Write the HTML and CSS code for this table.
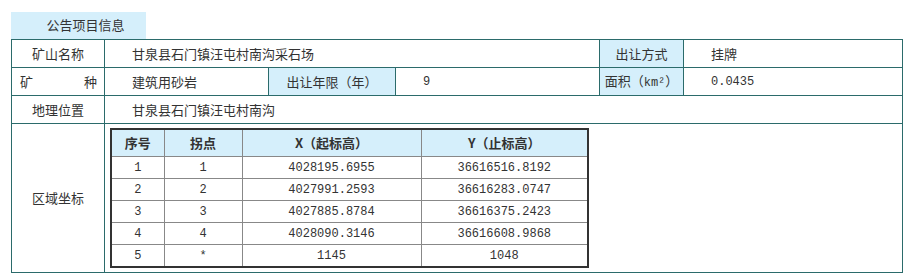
FILE: index.html
```html
<!DOCTYPE html>
<html lang="zh">
<head>
<meta charset="utf-8">
<title>公告项目信息</title>
<link rel="stylesheet" href="styles.css">
</head>
<body>
<div class="page">
  <div class="tab">公告项目信息</div>
  <table class="info">
    <colgroup>
      <col class="c1"><col class="c2"><col class="c3"><col class="c4"><col class="c5"><col class="c6">
    </colgroup>
    <tr>
      <td class="label">矿山名称</td>
      <td class="val" colspan="3">甘泉县石门镇汪屯村南沟采石场</td>
      <td class="label hl">出让方式</td>
      <td class="val">挂牌</td>
    </tr>
    <tr>
      <td class="label"><div class="spread"><span>矿</span><span>种</span></div></td>
      <td class="val">建筑用砂岩</td>
      <td class="label hl">出让年限（年）</td>
      <td class="val num">9</td>
      <td class="label hl">面积（<span class="unit">km²</span>）</td>
      <td class="val num">0.0435</td>
    </tr>
    <tr>
      <td class="label">地理位置</td>
      <td class="val" colspan="5">甘泉县石门镇汪屯村南沟</td>
    </tr>
    <tr class="big">
      <td class="label">区域坐标</td>
      <td class="coords" colspan="5">
        <table class="pts">
          <colgroup>
            <col class="p1"><col class="p2"><col class="p3"><col class="p4">
          </colgroup>
          <thead>
            <tr><th>序号</th><th>拐点</th><th>X（起标高）</th><th>Y（止标高）</th></tr>
          </thead>
          <tbody>
            <tr><td>1</td><td>1</td><td>4028195.6955</td><td>36616516.8192</td></tr>
            <tr><td>2</td><td>2</td><td>4027991.2593</td><td>36616283.0747</td></tr>
            <tr><td>3</td><td>3</td><td>4027885.8784</td><td>36616375.2423</td></tr>
            <tr><td>4</td><td>4</td><td>4028090.3146</td><td>36616608.9868</td></tr>
            <tr><td>5</td><td>*</td><td>1145</td><td>1048</td></tr>
          </tbody>
        </table>
      </td>
    </tr>
  </table>
</div>
</body>
</html>
```
FILE: styles.css
```css
html, body {
  margin: 0;
  padding: 0;
  background: #ffffff;
}
body {
  font-family: "Noto Sans CJK SC", "Liberation Sans", sans-serif;
  font-size: 13px;
  color: #333333;
}
.page {
  padding: 12px 0 0 11px;
}
.tab {
  width: 121px;
  height: 27px;
  line-height: 26px;
  padding-left: 14px;
  background: #d5effb;
  text-align: center;
  font-size: 13px;
  color: #333;
}
table.info {
  border-collapse: collapse;
  table-layout: fixed;
  width: 891px;
}
.info col.c1 { width: 93px; }
.info col.c2 { width: 164px; }
.info col.c3 { width: 127px; }
.info col.c4 { width: 204px; }
.info col.c5 { width: 84px; }
.info col.c6 { width: 219px; }
.info > tbody > tr > td {
  border: 1px solid #2b6b6b;
  height: 27px;
  padding: 0;
  line-height: 16px;
  vertical-align: middle;
}
.info td.label {
  text-align: center;
}
.info td.hl {
  background: #d5effb;
}
.info td.val {
  padding-left: 27px;
}
.num {
  font-family: "Liberation Mono", "DejaVu Sans Mono", monospace;
  font-size: 12px;
}
.unit {
  font-family: "Liberation Mono", monospace;
  font-size: 12px;
}
.spread {
  display: flex;
  justify-content: space-between;
  padding: 0 7px 0 8px;
}
.info tr.big > td {
  height: 148px;
}
.info td.coords {
  padding: 0 0 0 5px;
  vertical-align: middle;
}
table.pts {
  border-collapse: collapse;
  table-layout: fixed;
  width: 477px;
  border: 2px solid #333333;
}
.pts col.p1 { width: 53px; }
.pts col.p2 { width: 78px; }
.pts col.p3 { width: 179px; }
.pts col.p4 { width: 167px; }
.pts th, .pts td {
  border: 1px solid #888888;
  text-align: center;
  padding: 0;
  line-height: 14px;
}
.pts th {
  background: #d5effb;
  height: 26px;
  font-weight: bold;
  font-size: 13px;
  color: #333333;
}
.pts td {
  height: 21px;
  font-family: "Liberation Mono", "DejaVu Sans Mono", monospace;
  font-size: 12px;
  color: #333;
}
```
